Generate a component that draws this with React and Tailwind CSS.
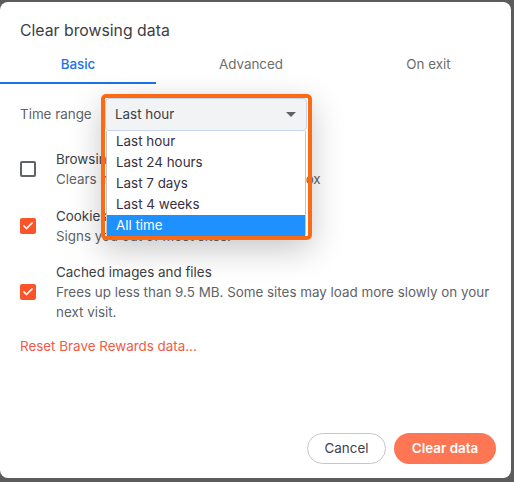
import { Check } from "lucide-react";

const font = { fontFamily: "Inter, 'Open Sans', sans-serif" };

const options = ["Last hour", "Last 24 hours", "Last 7 days", "Last 4 weeks", "All time"];

const CheckRow = ({ checked, title, desc, className = "" }) => (
  <div className={`flex items-center pl-5 pr-5 ${className}`}>
    {checked ? (
      <div className="w-4 h-4 shrink-0 rounded-[2px] bg-[#fb542b] flex items-center justify-center">
        <Check size={12} strokeWidth={3.5} className="text-white" />
      </div>
    ) : (
      <div className="w-4 h-4 shrink-0 rounded-[2px] border-2 border-[#5f6368]" />
    )}
    <div className="ml-5 text-[13.4px] leading-5">
      <div className="text-[#3c4043]">{title}</div>
      <div className="text-[#5f6368]">{desc}</div>
    </div>
  </div>
);

export default function App() {
  return (
    <div className="w-[514px] h-[482px] bg-[#5c5c5c] pt-[2px] pr-[3px] pb-[4px]" style={font}>
      <div className="relative w-[511px] h-[476px] bg-white rounded-lg flex flex-col">
        <div className="pl-5 pt-[19px] text-[15.8px] leading-5 text-[#3b3e45]">Clear browsing data</div>

        <div className="mt-[5px] grid grid-cols-[156px_190px_1fr] text-[13.4px]">
          <div className="h-[38px] flex items-center justify-center border-b-2 border-[#1a73e8] text-[#1a73e8] font-medium">
            Basic
          </div>
          <div className="h-[38px] flex items-center justify-center border-b-2 border-transparent text-[#6e6e6e]">
            Advanced
          </div>
          <div className="h-[38px] flex items-center justify-center border-b-2 border-transparent text-[#6e6e6e]">
            On exit
          </div>
        </div>

        <div className="mt-[14px] flex items-center pl-5 text-[13.4px] text-[#5f6368]">
          <div className="w-[85px]">Time range</div>
          <div className="relative w-[202px] h-[33px]">
            <div className="h-full flex items-center justify-between pl-[9px] pr-[10px] bg-[#f1f3f4] border border-[#c6d4ec] rounded-[4px] text-[#3c4043]">
              <span>Last hour</span>
              <svg width="10" height="5" viewBox="0 0 10 5">
                <path d="M0 0 L10 0 L5 5 Z" fill="#5f6368" />
              </svg>
            </div>

            {/* open dropdown */}
            <div className="absolute left-[1px] top-[33px] w-[200px] bg-white border border-[#c4c4c4] border-t-0 rounded-b-[4px] z-10">
              {options.map((o, i) => (
                <div
                  key={o}
                  className={`h-[21px] flex items-center pl-[9px] text-[13.4px] ${
                    i === options.length - 1 ? "bg-[#1e90ff] text-white" : "text-[#3a2f42]"
                  }`}
                >
                  {o}
                </div>
              ))}
            </div>

            {/* highlight frame */}
            <div className="absolute -left-[4px] -top-[4px] w-[211px] h-[146px] border-4 border-[#fd6a14] rounded-[5px] shadow-[0_10px_32px_rgba(0,0,0,0.22)] pointer-events-none z-20" />
          </div>
        </div>

        <CheckRow
          className="mt-[18px]"
          title="Browsing history"
          desc="Clears history, including in the search box"
        />
        <CheckRow
          checked
          className="mt-[17px]"
          title="Cookies and other site data"
          desc="Signs you out of most sites."
        />
        <CheckRow
          checked
          className="mt-4"
          title="Cached images and files"
          desc="Frees up less than 9.5 MB. Some sites may load more slowly on your next visit."
        />

        <div className="mt-[14px] pl-5 text-[13.4px] leading-5 text-[#f25a45]">Reset Brave Rewards data...</div>

        <div className="mt-auto flex justify-end gap-2 pr-[15px] pb-[14px]">
          <button className="w-[79px] h-[31px] rounded-full border border-[#c5c7d0] text-[13.4px] text-[#3b3e4f] bg-white">
            Cancel
          </button>
          <button className="w-[102px] h-[31px] rounded-full bg-[#ff7654] text-[13.4px] font-semibold text-white">
            Clear data
          </button>
        </div>
      </div>
    </div>
  );
}
